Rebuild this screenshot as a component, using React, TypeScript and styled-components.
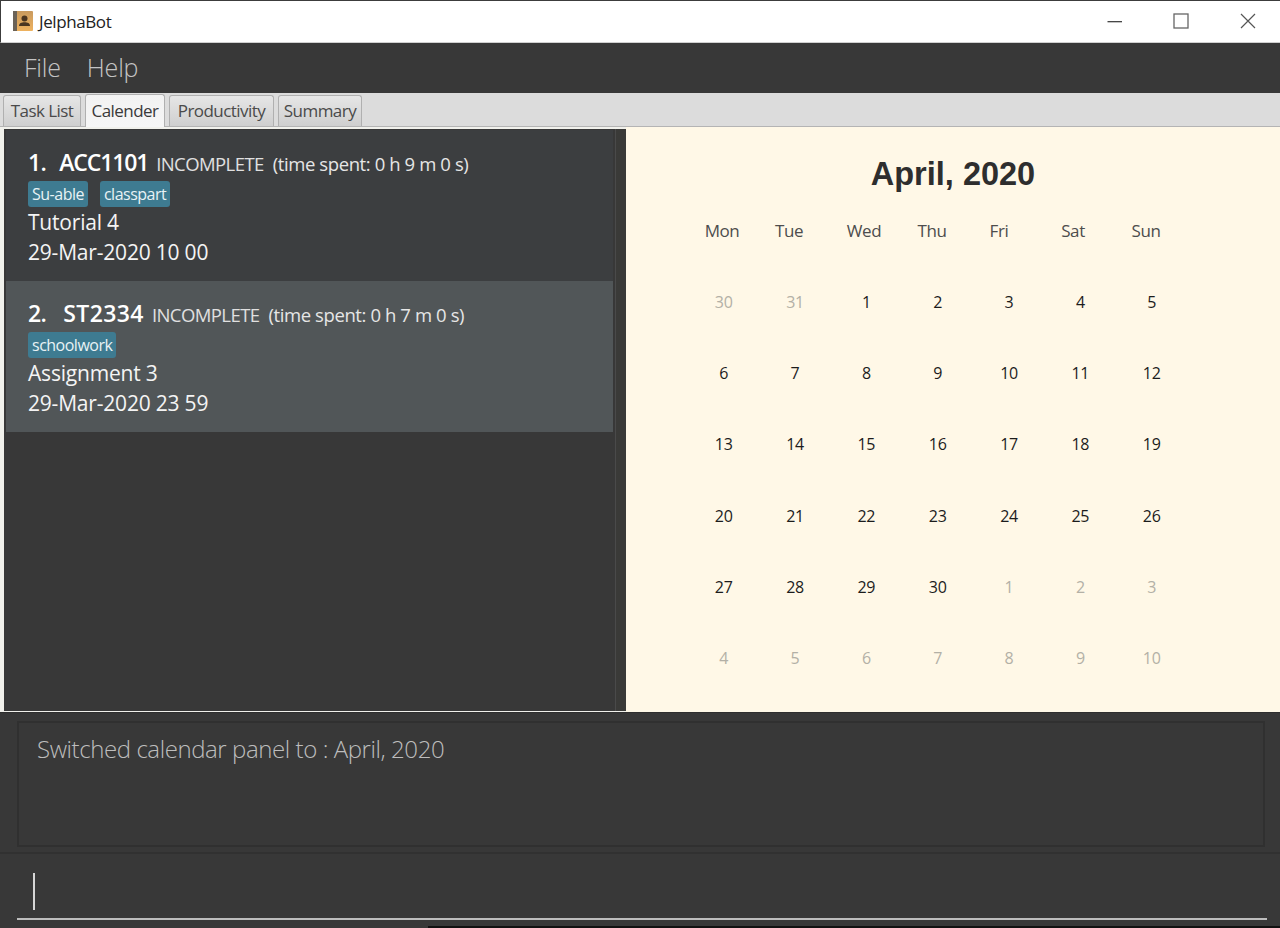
import React from "react"
import styled, { createGlobalStyle } from "styled-components"

const uiFont = `"Open Sans", "Noto Sans", sans-serif`

const tasks = [
  {
    index: "1.",
    indexGap: 13,
    code: "ACC1101",
    codeTracking: -1.15,
    spent: "(time spent: 0 h 9 m 0 s)",
    tags: ["Su-able", "classpart"],
    name: "Tutorial 4",
    due: "29-Mar-2020 10 00",
  },
  {
    index: "2.",
    indexGap: 17,
    code: "ST2334",
    codeTracking: 0.4,
    spent: "(time spent: 0 h 7 m 0 s)",
    tags: ["schoolwork"],
    name: "Assignment 3",
    due: "29-Mar-2020 23 59",
  },
]

const tabs = [
  { label: "Task List", width: 78 },
  { label: "Calender", width: 80 },
  { label: "Productivity", width: 105 },
  { label: "Summary", width: 84 },
]

const weekDays = [
  { label: "Mon", width: 70 },
  { label: "Tue", width: 64 },
  { label: "Wed", width: 86 },
  { label: "Thu", width: 50 },
  { label: "Fri", width: 84 },
  { label: "Sat", width: 64 },
  { label: "Sun", width: 82 },
]

const firstOfMonth = 2
const cells = Array.from({ length: 42 }, (_, i) => {
  const day = i - firstOfMonth + 1
  if (day < 1) return { text: 30 + i, muted: true }
  if (day > 30) return { text: day - 30, muted: true }
  return { text: day, muted: false }
})

const App: React.FC = () => (
  <>
    <GlobalStyle />
    <Window>
      <TitleBar>
        <AppIcon viewBox="0 0 20 20">
          <defs>
            <linearGradient id="bookCover" x1="0" y1="0" x2="0" y2="1">
              <stop offset="0" stopColor="#c99a5e" />
              <stop offset="1" stopColor="#eeb25f" />
            </linearGradient>
          </defs>
          <rect x="0" y="0" width="20" height="20" rx="1" fill="url(#bookCover)" />
          <rect x="0" y="0" width="4" height="20" fill="#6b6257" />
          <circle cx="11.5" cy="7.5" r="3" fill="#4a3520" />
          <path d="M6 15c0-3 2.5-3.8 5.5-3.8S17 12 17 15z" fill="#4a3520" />
        </AppIcon>
        <AppTitle>JelphaBot</AppTitle>
        <WindowButtons>
          <WindowButton>
            <svg width="16" height="16" viewBox="0 0 16 16">
              <path d="M1.5 8.7H16" stroke="#333" strokeWidth="1.2" />
            </svg>
          </WindowButton>
          <WindowButton>
            <svg width="16" height="16" viewBox="0 0 16 16">
              <rect x="1" y="1" width="14" height="14" fill="none" stroke="#666" strokeWidth="1.3" />
            </svg>
          </WindowButton>
          <WindowButton>
            <svg width="16" height="16" viewBox="0 0 16 16">
              <path d="M1 1l14 14M15 1L1 15" stroke="#555" strokeWidth="1.2" />
            </svg>
          </WindowButton>
        </WindowButtons>
      </TitleBar>

      <MenuBar>
        <MenuItem>File</MenuItem>
        <MenuItem>Help</MenuItem>
      </MenuBar>

      <TabBar>
        {tabs.map((tab) => (
          <Tab key={tab.label} $width={tab.width} $active={tab.label === "Calender"}>
            {tab.label}
          </Tab>
        ))}
      </TabBar>

      <Main>
        <TaskPanel>
          <TaskList>
            {tasks.map((task, i) => (
              <TaskCard key={task.code} $selected={i === 1}>
                <TaskHeading>
                  <TaskIndex $gap={task.indexGap}>{task.index}</TaskIndex>
                  <TaskCode $tracking={task.codeTracking}>{task.code}</TaskCode>
                  <TaskStatus>INCOMPLETE</TaskStatus>
                  <TaskSpent>{task.spent}</TaskSpent>
                </TaskHeading>
                <TagRow>
                  {task.tags.map((tag) => (
                    <Tag key={tag}>{tag}</Tag>
                  ))}
                </TagRow>
                <TaskLine>{task.name}</TaskLine>
                <TaskLine>{task.due}</TaskLine>
              </TaskCard>
            ))}
          </TaskList>
          <Divider />
        </TaskPanel>

        <CalendarPanel>
          <MonthTitle>April, 2020</MonthTitle>
          <WeekRow>
            {weekDays.map((d) => (
              <WeekDay key={d.label} $width={d.width}>
                {d.label}
              </WeekDay>
            ))}
          </WeekRow>
          <DayGrid>
            {cells.map((cell, i) => (
              <DayCell key={i} $muted={cell.muted}>
                {cell.text}
              </DayCell>
            ))}
          </DayGrid>
        </CalendarPanel>
      </Main>

      <ResultSection>
        <ResultBox>Switched calendar panel to : April, 2020</ResultBox>
      </ResultSection>

      <CommandSection>
        <CommandField>
          <Caret />
        </CommandField>
      </CommandSection>

      <BottomEdge />
    </Window>
  </>
)

const GlobalStyle = createGlobalStyle`
  html, body {
    margin: 0;
    padding: 0;
    background: #383838;
  }
`

const Window = styled.div`
  width: 1280px;
  height: 928px;
  display: flex;
  flex-direction: column;
  overflow: hidden;
  font-family: ${uiFont};
`

const TitleBar = styled.header`
  height: 43px;
  box-sizing: border-box;
  flex: none;
  display: flex;
  align-items: center;
  padding: 0 0 0 13px;
  background: #fff;
  border-top: 1px solid #3c3c3c;
  border-left: 1px solid #3c3c3c;
  border-bottom: 1px solid #cfcfcf;
`

const AppIcon = styled.svg`
  width: 20px;
  height: 20px;
  margin-left: -1px;
  margin-top: -2px;
`

const AppTitle = styled.span`
  margin-left: 6px;
  font-size: 17px;
  letter-spacing: -0.4px;
  color: #222;
`

const WindowButtons = styled.div`
  margin-left: auto;
  margin-right: -1px;
  display: flex;
  align-items: center;
`

const WindowButton = styled.div`
  width: 67px;
  display: flex;
  justify-content: center;
  line-height: 0;
  margin-top: -2px;
`

const MenuBar = styled.nav`
  height: 50px;
  flex: none;
  display: flex;
  align-items: center;
  gap: 26px;
  padding: 0 0 2px 24px;
  box-sizing: border-box;
  background: #383838;
`

const MenuItem = styled.span`
  font-size: 25px;
  font-weight: 300;
  letter-spacing: -0.2px;
  color: #c4c4c4;
`

const TabBar = styled.div`
  height: 34px;
  box-sizing: border-box;
  flex: none;
  display: flex;
  align-items: flex-end;
  gap: 4px;
  padding: 1px 0 0 3px;
  background: #dcdcdc;
  border-bottom: 1px solid #b4b4b4;
`

const Tab = styled.div<{ $active?: boolean; $width: number }>`
  width: ${(p) => p.$width}px;
  height: ${(p) => (p.$active ? "33px" : "31px")};
  margin-bottom: ${(p) => (p.$active ? "-1px" : "0")};
  box-sizing: border-box;
  padding-bottom: 2px;
  display: flex;
  align-items: center;
  justify-content: center;
  font-size: 17px;
  letter-spacing: -0.55px;
  color: ${(p) => (p.$active ? "#3a3a3a" : "#4a4a4a")};
  background: ${(p) =>
    p.$active ? "linear-gradient(#f2f2f2, #f6f6f6)" : "linear-gradient(#e6e6e6, #cfcfcf)"};
  border: 1px solid #b0b0b0;
  border-bottom: none;
  border-radius: 3px 3px 0 0;
`

const Main = styled.main`
  height: 585px;
  flex: none;
  display: flex;
  background: #e9e9e9;
`

const TaskPanel = styled.section`
  width: 626px;
  flex: none;
  display: flex;
  box-sizing: border-box;
  padding: 2px 0 1px 4px;
  background: #f1f1ec;
`

const TaskList = styled.div`
  flex: 1;
  padding: 1px 2px 0 2px;
  background: #383838;
  border-right: 1px solid #4a4a4a;
`

const TaskCard = styled.article<{ $selected?: boolean }>`
  height: 151px;
  box-sizing: border-box;
  padding: 16px 0 0 22px;
  background: ${(p) => (p.$selected ? "#515658" : "#3c3e40")};
  color: #fff;
`

const TaskHeading = styled.div`
  height: 36px;
  display: flex;
  align-items: baseline;
`

const TaskIndex = styled.span<{ $gap: number }>`
  font-size: 23px;
  font-weight: 600;
  letter-spacing: -0.6px;
  margin-right: ${(p) => p.$gap}px;
`

const TaskCode = styled.span<{ $tracking: number }>`
  font-size: 23px;
  font-weight: 600;
  letter-spacing: ${(p) => p.$tracking}px;
  margin-right: 8px;
`

const TaskStatus = styled.span`
  font-size: 18.5px;
  letter-spacing: -0.58px;
  color: #e0e0e0;
  margin-right: 9px;
`

const TaskSpent = styled.span`
  font-size: 18.5px;
  letter-spacing: -0.4px;
  color: #e6e6e6;
`

const TagRow = styled.div`
  display: flex;
  gap: 12px;
  height: 26px;
  margin-top: -1px;
`

const Tag = styled.span`
  height: 26px;
  box-sizing: border-box;
  padding: 0 4px;
  display: flex;
  align-items: center;
  font-size: 16px;
  letter-spacing: -0.5px;
  color: #e8f2f5;
  background: #3e7b91;
  border-radius: 3px;
`

const TaskLine = styled.div`
  height: 30px;
  line-height: 30px;
  font-size: 21px;
  letter-spacing: -0.2px;
  color: #f4f4f4;
`

const Divider = styled.div`
  width: 10px;
  flex: none;
  background: #3a3a38;
`

const CalendarPanel = styled.section`
  flex: 1;
  box-sizing: border-box;
  padding: 27px 0 0 61px;
  background: #fff8e7;
`

const MonthTitle = styled.h1`
  width: 532px;
  margin: 0;
  text-align: center;
  font-family: "Liberation Sans", Arial, sans-serif;
  font-size: 32.5px;
  font-weight: 700;
  line-height: 40px;
  color: #2e2e2e;
`

const WeekRow = styled.div`
  display: flex;
  margin-top: 25px;
  height: 24px;
`

const WeekDay = styled.div<{ $width: number }>`
  width: ${(p) => p.$width}px;
  text-align: center;
  font-size: 17px;
  line-height: 24px;
  letter-spacing: -0.4px;
  color: #4d4d4d;
`

const DayGrid = styled.div`
  display: grid;
  grid-template-columns: repeat(7, 71.33px);
  grid-auto-rows: 71.33px;
  margin: 23px 0 0 1px;
`

const DayCell = styled.div<{ $muted?: boolean }>`
  display: flex;
  align-items: center;
  justify-content: center;
  font-size: 16px;
  letter-spacing: -0.3px;
  color: ${(p) => (p.$muted ? "#b3b0a6" : "#1c1c1c")};
`

const ResultSection = styled.section`
  height: 142px;
  flex: none;
  box-sizing: border-box;
  padding: 8px 15px 5px 17px;
  background: #383838;
  border-top: 1px solid #2e2e2e;
  border-bottom: 2px solid #313131;
`

const ResultBox = styled.div`
  height: 100%;
  box-sizing: border-box;
  padding: 8px 0 0 18px;
  font-size: 24px;
  font-weight: 300;
  letter-spacing: -0.42px;
  line-height: 36px;
  color: #bdbdbd;
  border: 2px solid #303030;
`

const CommandSection = styled.section`
  height: 72px;
  flex: none;
  box-sizing: border-box;
  padding: 0 13px 0 17px;
  background: #383838;
`

const CommandField = styled.div`
  height: 66px;
  box-sizing: border-box;
  padding: 19px 0 0 16px;
  border-bottom: 2px solid #bdbdbd;
`

const Caret = styled.div`
  width: 2px;
  height: 37px;
  background: #d6d6d6;
`

const BottomEdge = styled.div`
  height: 2px;
  flex: none;
  margin-left: 428px;
  background: #111;
`

export default App
